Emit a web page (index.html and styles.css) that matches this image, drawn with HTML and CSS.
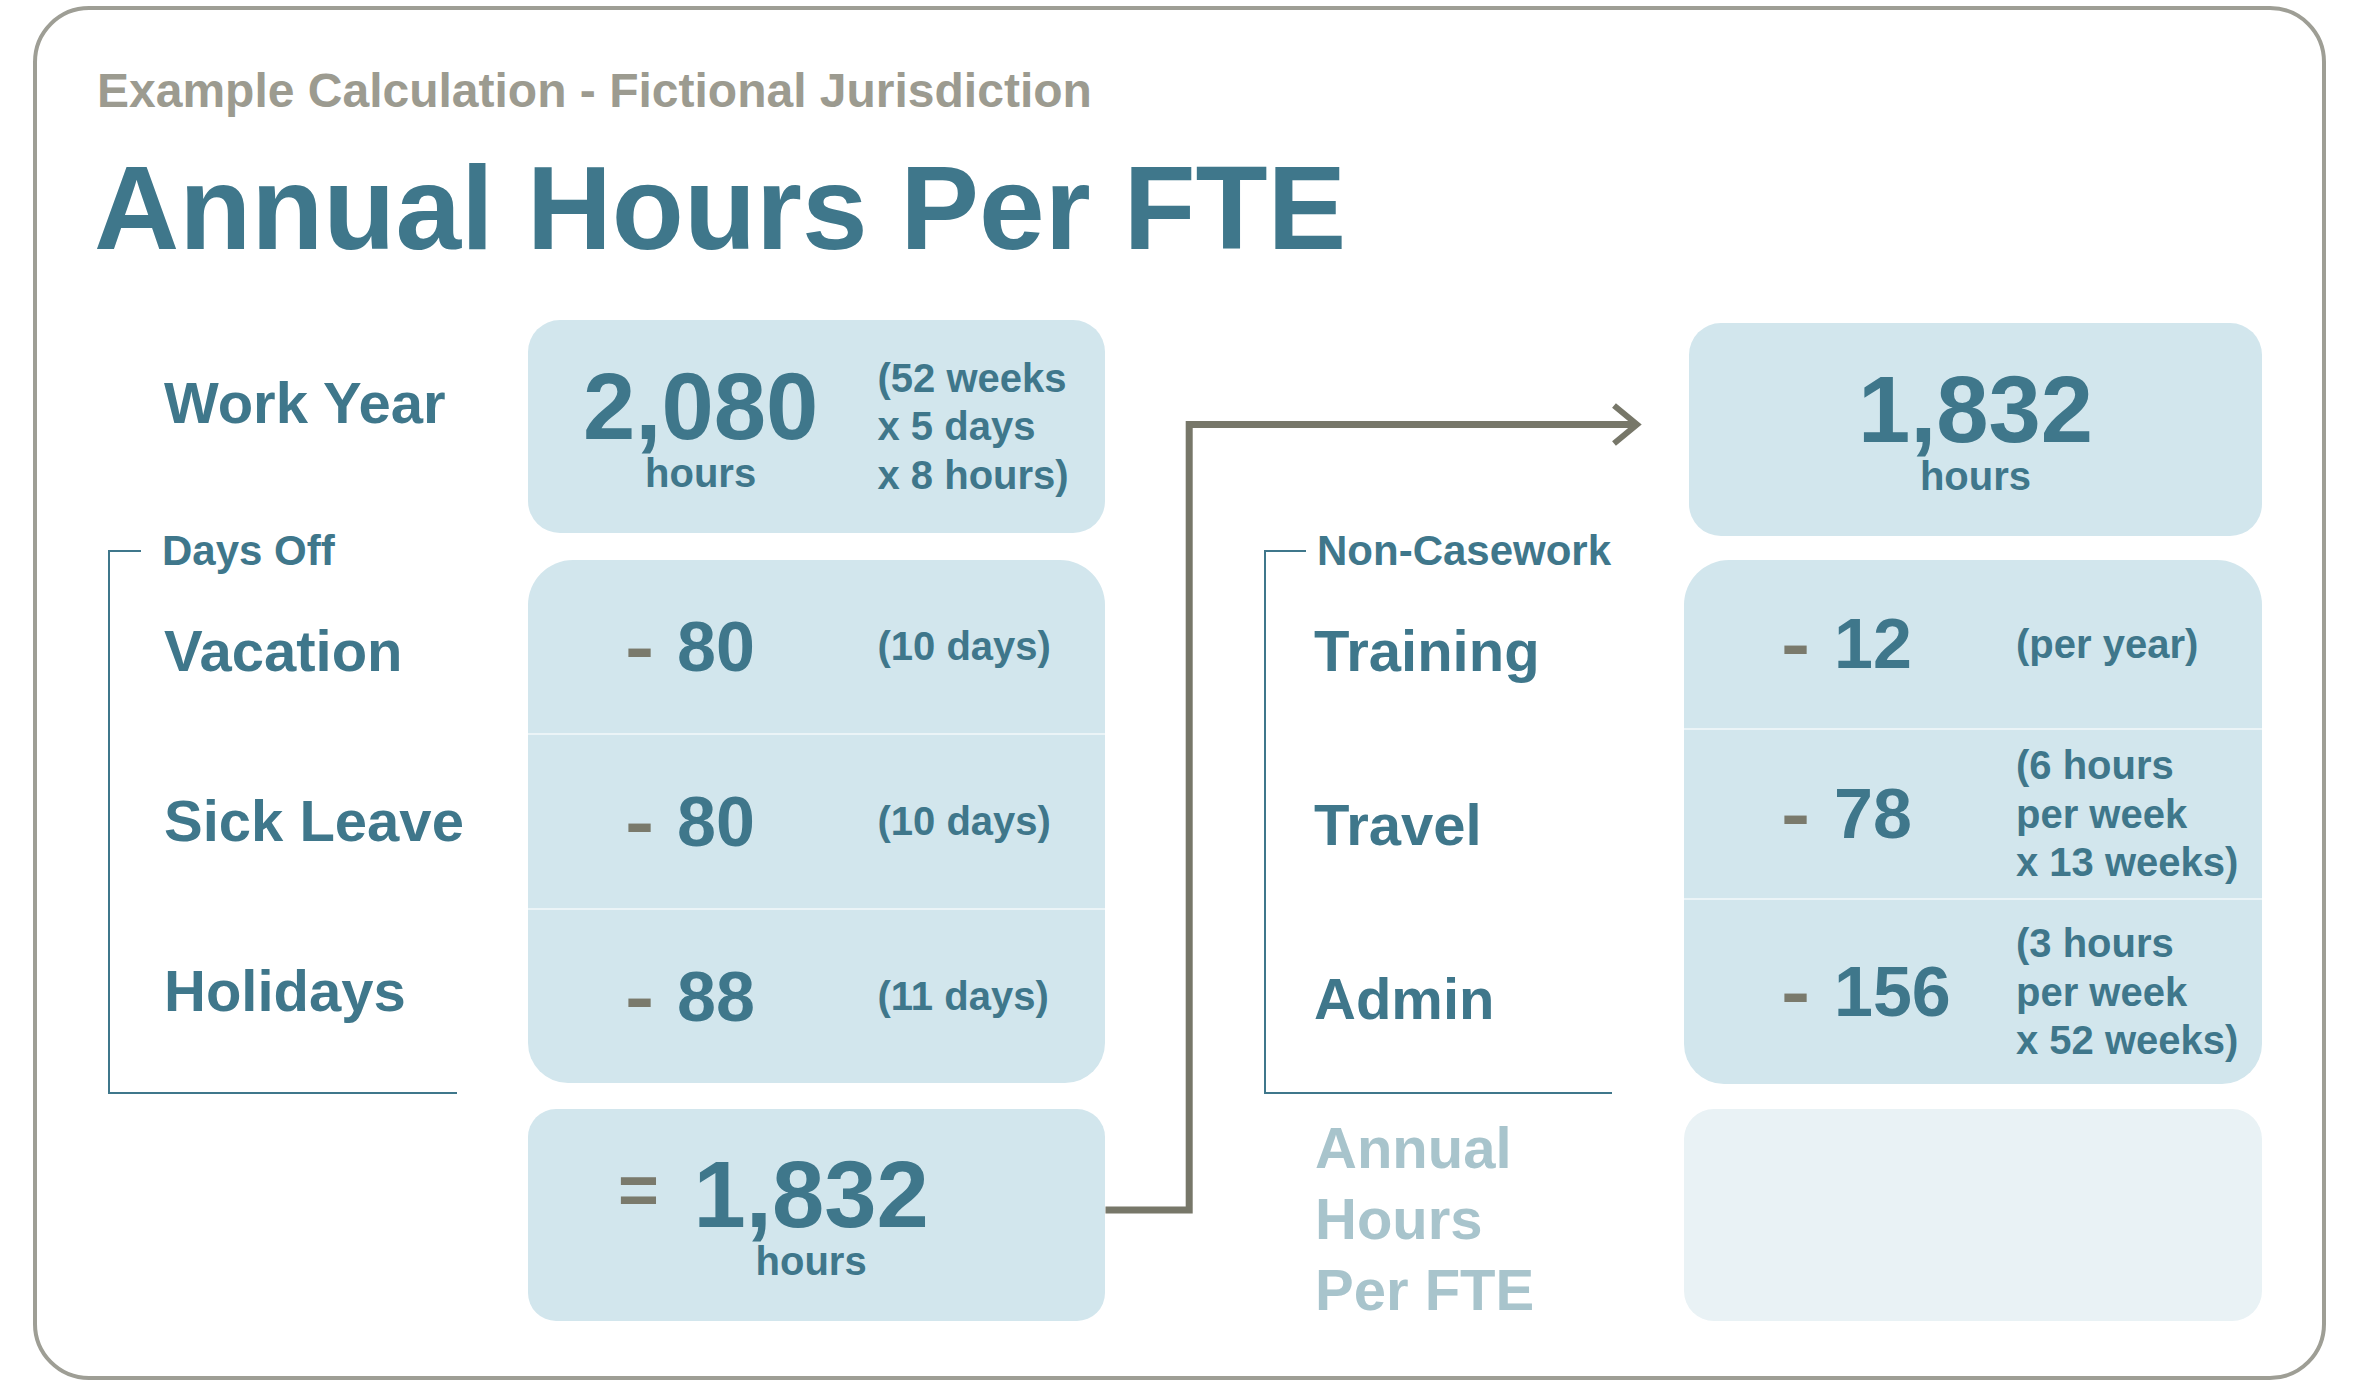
FILE: index.html
```html
<!DOCTYPE html>
<html lang="en">
<head>
<meta charset="utf-8">
<title>Annual Hours Per FTE</title>
<link rel="stylesheet" href="styles.css">
</head>
<body>
<div class="card">
  <header class="header">
    <h2 class="subtitle">Example Calculation - Fictional Jurisdiction</h2>
    <h1 class="title">Annual Hours Per FTE</h1>
  </header>

  <main class="calc">
    <section class="group group-left">
      <div class="labels">
        <div class="label-a"><span class="label">Work Year</span></div>
        <div class="bracket bracket-left">
          <div class="bracket-head"><span class="tick"></span><span class="bracket-title">Days Off</span></div>
          <div class="bracket-rows">
            <div class="label-row"><span class="label">Vacation</span></div>
            <div class="label-row"><span class="label">Sick Leave</span></div>
            <div class="label-row"><span class="label">Holidays</span></div>
          </div>
        </div>
        <div class="label-c"></div>
      </div>
      <div class="boxes">
        <div class="box box-a">
          <div class="figure">
            <span class="figure-num">2,080</span>
            <span class="figure-unit">hours</span>
          </div>
          <div class="note">(52 weeks<br>x 5 days<br>x 8 hours)</div>
        </div>
        <div class="box box-b">
          <div class="row row-l"><span class="minus">-</span><span class="amount">80</span><span class="note">(10 days)</span></div>
          <div class="row row-l row-sep"><span class="minus">-</span><span class="amount">80</span><span class="note">(10 days)</span></div>
          <div class="row row-l row-sep"><span class="minus">-</span><span class="amount">88</span><span class="note">(11 days)</span></div>
        </div>
        <div class="box box-c">
          <span class="equals">=</span>
          <div class="figure">
            <span class="figure-num">1,832</span>
            <span class="figure-unit">hours</span>
          </div>
        </div>
      </div>
    </section>

    <section class="group group-right">
      <div class="labels">
        <div class="label-a"></div>
        <div class="bracket bracket-right">
          <div class="bracket-head"><span class="tick"></span><span class="bracket-title">Non-Casework</span></div>
          <div class="bracket-rows">
            <div class="label-row"><span class="label">Training</span></div>
            <div class="label-row"><span class="label">Travel</span></div>
            <div class="label-row"><span class="label">Admin</span></div>
          </div>
        </div>
        <div class="label-c"><span class="total-label">Annual<br>Hours<br>Per FTE</span></div>
      </div>
      <div class="boxes">
        <div class="box box-a box-result">
          <div class="figure">
            <span class="figure-num">1,832</span>
            <span class="figure-unit">hours</span>
          </div>
        </div>
        <div class="box box-b box-b-right">
          <div class="row row-r row-1"><span class="minus">-</span><span class="amount">12</span><span class="note">(per year)</span></div>
          <div class="row row-r row-2 row-sep"><span class="minus">-</span><span class="amount">78</span><span class="note">(6 hours<br>per week<br>x 13 weeks)</span></div>
          <div class="row row-r row-3 row-sep"><span class="minus">-</span><span class="amount">156</span><span class="note">(3 hours<br>per week<br>x 52 weeks)</span></div>
        </div>
        <div class="box box-empty"></div>
      </div>
    </section>
  </main>

  <svg class="connector" width="2285" height="1366" viewBox="0 0 2285 1366" aria-hidden="true">
    <path d="M1068.5 1200 H1152.2 V414.5 H1598" fill="none" stroke="#777769" stroke-width="7" stroke-linejoin="miter"/>
    <polyline points="1577,395.5 1600,414.5 1577,433.5" fill="none" stroke="#777769" stroke-width="6" stroke-linejoin="miter"/>
  </svg>
</div>
</body>
</html>
```

FILE: styles.css
```css
* {
  box-sizing: border-box;
}

body {
  margin: 0;
  background: #ffffff;
  font-family: "Liberation Sans", Arial, Helvetica, sans-serif;
  font-weight: 700;
  color: #3f778b;
}

.card {
  position: relative;
  width: 2293px;
  height: 1374px;
  margin: 6px 0 0 33px;
  border: 4px solid #9e9e95;
  border-radius: 56px;
  background: #ffffff;
}

.header {
  padding: 57px 0 0 60px;
}

.subtitle {
  margin: 0;
  font-size: 48px;
  line-height: 47px;
  font-weight: 700;
  color: #9c9b90;
  white-space: nowrap;
}

.title {
  margin: 35px 0 0 -3px;
  font-size: 118px;
  line-height: 118px;
  font-weight: 700;
  white-space: nowrap;
}

.calc {
  display: flex;
  gap: 159px;
  margin-top: 53px;
  padding-left: 71px;
}

.group {
  display: flex;
}

.labels {
  width: 420px;
  display: flex;
  flex-direction: column;
}

.label-a {
  height: 231px;
  padding: 54px 0 0 56px;
}

.label {
  font-size: 58px;
  line-height: 58px;
  white-space: nowrap;
}

.bracket {
  height: 543px;
  border-left: 2px solid #3f778b;
  border-bottom: 2px solid #3f778b;
  display: flex;
  flex-direction: column;
}

.bracket-left {
  width: 349px;
}

.bracket-right {
  width: 348px;
}

.bracket-head {
  display: flex;
  align-items: center;
  height: 42px;
  margin: -21px 0 0 -2px;
}

.tick {
  height: 2px;
  background: #3f778b;
}

.bracket-left .tick {
  width: 33px;
  margin-right: 21px;
}

.bracket-right .tick {
  width: 42px;
  margin-right: 11px;
}

.bracket-title {
  font-size: 42px;
  line-height: 42px;
  white-space: nowrap;
}

.bracket-rows {
  padding-top: 50px;
}

.bracket-left .label-row {
  height: 170px;
  padding-left: 54px;
}

.bracket-right .label-row {
  height: 174px;
  padding-left: 48px;
}

.label-c {
  padding: 18px 0 0 51px;
}

.total-label {
  display: block;
  font-size: 58px;
  line-height: 71px;
  color: #a8c4cc;
  white-space: nowrap;
}

.boxes {
  width: 577px;
  display: flex;
  flex-direction: column;
}

.group-right .boxes {
  width: 578px;
}

.box {
  background: #d2e6ed;
}

.box-a {
  height: 213px;
  border-radius: 32px;
  margin-bottom: 27px;
  display: grid;
  grid-template-columns: 294.5px auto;
  align-items: center;
  padding-left: 55px;
}

.box-result {
  display: flex;
  justify-content: center;
  padding-left: 0;
  margin: 3px 0 24px 5px;
}

.box-b {
  height: 523px;
  border-radius: 45px 45px 40px 40px;
  margin-bottom: 26px;
  display: flex;
  flex-direction: column;
}

.box-b-right {
  height: 524px;
  margin-bottom: 25px;
}

.row {
  flex: 1 1 0;
  display: grid;
  align-items: center;
  padding-left: 97px;
}

.row-l {
  grid-template-columns: 52px 200.5px auto;
}

.row-r {
  grid-template-columns: 53px 182px auto;
}

.row-1 {
  flex: 0 0 168px;
}

.row-2 {
  flex: 0 0 170px;
}

.row-3 {
  flex: 0 0 186px;
}

.row-sep {
  border-top: 2px solid #ebf4f7;
}

.box-c {
  height: 212px;
  border-radius: 28px;
  display: grid;
  grid-template-columns: 75.5px auto;
  align-items: center;
  padding-left: 90px;
}

.box-empty {
  height: 212px;
  border-radius: 30px;
  background: #e9f2f5;
}

.figure {
  display: inline-flex;
  flex-direction: column;
  align-items: center;
  justify-self: start;
}

.figure-num {
  font-size: 94px;
  line-height: 92px;
  white-space: nowrap;
}

.figure-unit {
  font-size: 40px;
  line-height: 40px;
}

.note {
  font-size: 40px;
  line-height: 48.5px;
  white-space: nowrap;
}

.minus {
  display: inline-block;
  font-size: 70px;
  line-height: 70px;
  color: #7a7a6c;
  transform: scaleX(1.25);
  transform-origin: left center;
}

.amount {
  font-size: 70px;
  line-height: 70px;
  white-space: nowrap;
}

.equals {
  align-self: start;
  margin-top: 46px;
  font-size: 70px;
  line-height: 70px;
  color: #7a7a6c;
}

.connector {
  position: absolute;
  top: 0;
  left: 0;
  pointer-events: none;
}
```
